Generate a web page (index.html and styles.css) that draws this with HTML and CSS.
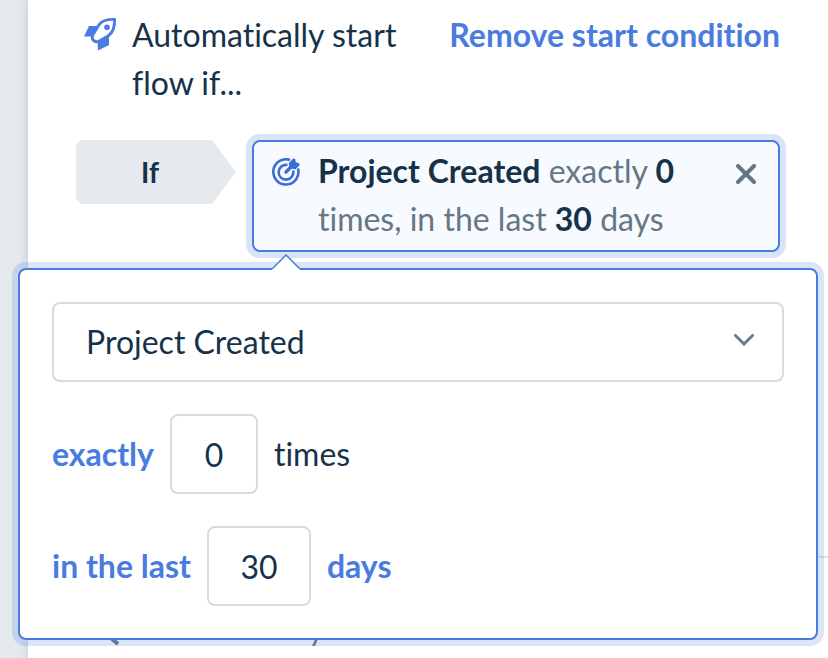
FILE: index.html
```html
<!DOCTYPE html>
<html lang="en">
<head>
<meta charset="utf-8">
<title>Flow start condition</title>
<link rel="stylesheet" href="styles.css">
</head>
<body>
<main class="panel">
  <section class="section">
    <header class="head">
      <svg class="head-icon" viewBox="0 0 32 32" aria-hidden="true">
        <path d="M5 8H15L9 18.500H0ZM13.500 23L25 18V27L14 32.500Z" fill="currentColor"/>
        <path d="M30.500 1.500C23.500 1 17.500 3 14.500 7.500L8.500 17.500Q7.500 20.500 9.500 22.500Q12 24.500 14.500 23.500L24 18C29 14.500 31 9 30.500 1.500Z" fill="#fff" stroke="currentColor" stroke-width="2.900"/>
        <circle cx="23" cy="9.200" r="2.800" fill="currentColor"/>
      </svg>
      <h2 class="head-title">Automatically start flow if...</h2>
      <a class="link" href="#remove-start">Remove start condition</a>
    </header>
    <div class="rule">
      <div class="tag">If</div>
      <div class="card">
        <svg class="card-icon" viewBox="0 0 28 28" aria-hidden="true">
          <g fill="none" stroke="currentColor" stroke-width="2.600">
            <path d="M18 2A12.600 12.600 0 1 0 26 10.500"/>
            <path d="M15.500 7A7.400 7.400 0 1 0 21.200 12.500"/>
            <path d="M14 14L20 8" stroke-width="3.400" stroke-linecap="round"/>
          </g>
          <path d="M16.800 5L21.500 .3L23.300 1.300L23.800 4.300L27.200 5.200L27.800 7L23.500 11.200L17.500 10.500Z" fill="currentColor"/>
        </svg>
        <p class="card-text"><b>Project Created</b> exactly <b>0</b> times, in the last <b>30</b> days</p>
        <button class="close" type="button" aria-label="Remove condition">
          <svg viewBox="0 0 20 20" aria-hidden="true"><path d="M2 2L18 18M18 2L2 18" fill="none" stroke="currentColor" stroke-width="4" stroke-linecap="round"/></svg>
        </button>
      </div>
      <form class="popover">
        <svg class="arrow" viewBox="0 0 28 16" aria-hidden="true"><path d="M0 15L14 1L28 15V16H0Z" fill="#fff"/><path d="M0 15L14 1L28 15" fill="none" stroke="#4a7ce0" stroke-width="1.500"/></svg>
        <div class="select-box">
          <select class="select" aria-label="Event"><option>Project Created</option></select>
          <svg class="chevron" viewBox="0 0 20 12" aria-hidden="true"><path d="M1.500 1.500L10 10L18.500 1.500" fill="none" stroke="currentColor" stroke-width="3" stroke-linecap="round"/></svg>
        </div>
        <div class="field-row">
          <button class="link" type="button">exactly</button>
          <input class="number count" type="text" inputmode="numeric" id="count" value="0">
          <label for="count">times</label>
        </div>
        <div class="field-row">
          <button class="link" type="button">in the last</button>
          <input class="number period" type="text" inputmode="numeric" aria-label="Length of period" value="30">
          <button class="link" type="button">days</button>
        </div>
      </form>
    </div>
  </section>
  <section class="section exit">
    <header class="head">
      <svg class="head-icon muted" viewBox="0 0 32 32" aria-hidden="true"><path d="M16 6V18L34 33" fill="none" stroke="currentColor" stroke-width="4"/></svg>
      <h2 class="head-title muted">Automatically exit</h2>
      <a class="link" href="#remove-exit">Remove exit condition</a>
    </header>
  </section>
</main>
</body>
</html>
```
FILE: styles.css
```css
* { box-sizing: border-box; }

body {
  margin: 0;
  height: 100vh;
  overflow: hidden;
  padding-left: 28px;
  background: #e5eaee;
  color: #16324a;
  font: 400 32px/48px Lato, "Noto Sans", sans-serif;
  font-variant-ligatures: none;
}

h2, p { margin: 0; font-size: inherit; font-weight: 400; }
b { font-weight: 700; color: #16324a; }
button { padding: 0; border: 0; background: none; cursor: pointer; }
select, input { font: inherit; color: inherit; }

.panel {
  min-height: 100vh;
  background: #fff;
  box-shadow: 0 0 10px #b9c8d6;
}

.section { padding: 11px 48px 304px; }
.section.exit { padding: 46px 48px 0; border-top: 2px solid #dde4ea; }

.head { display: flex; align-items: flex-start; }
.head-icon {
  flex: none;
  width: 32px;
  height: 32px;
  margin: 7px 16px 0 8px;
  overflow: visible;
  color: #4a7ce0;
}
.head-title { flex: 1; padding-right: 32px; }
.muted { color: #5f7890; }

.link {
  flex: none;
  color: #4a7ce0;
  font: inherit;
  font-weight: 700;
  font-variant-ligatures: none;
  text-decoration: none;
}

.rule {
  position: relative;
  display: flex;
  align-items: flex-start;
  gap: 16px;
  margin-top: 33px;
}

.tag {
  flex: none;
  width: 160px;
  padding: 8px 12px 8px 0;
  border-radius: 8px;
  background: #e5eaee;
  clip-path: polygon(0 0, 136px 0, 100% 50%, 136px 100%, 0 100%);
  font-size: 28px;
  font-weight: 700;
  text-align: center;
}

.card {
  flex: 1;
  display: flex;
  align-items: flex-start;
  padding: 5px 22px 7px 18px;
  border: 2px solid #4a7ce0;
  border-radius: 8px;
  background: #f7faff;
  box-shadow: 0 0 0 6px #dae4f7;
  color: #657784;
}
.card-icon { flex: none; width: 28px; height: 28px; margin: 11px 18px 0 0; color: #3a6dd5; }
.card-text { flex: 1; }
.close { flex: none; width: 20px; height: 20px; margin: 17px 0 0 16px; color: #657784; }
.close svg { display: block; }

.popover {
  position: absolute;
  top: calc(100% + 16px);
  left: -58px;
  right: -38px;
  display: grid;
  gap: 32px;
  padding: 32px;
  border: 2px solid #4a7ce0;
  border-radius: 8px;
  background: #fff;
  box-shadow: 0 0 0 6px rgba(74, 124, 224, .2);
}
.arrow { position: absolute; top: -16px; left: 252px; width: 28px; height: 16px; }

.select-box { position: relative; }
.select, .number {
  display: block;
  height: 80px;
  border: 2px solid #d2dce5;
  border-radius: 8px;
  background: #fff;
}
.select { width: 100%; padding: 0 80px 0 32px; appearance: none; }
.chevron { position: absolute; top: 32px; right: 30px; width: 20px; height: 12px; color: #6b7c8c; }

.field-row { display: flex; align-items: center; gap: 16px; }
.number { padding: 0; text-align: center; }
.count { width: 88px; }
.period { width: 104px; }
```
